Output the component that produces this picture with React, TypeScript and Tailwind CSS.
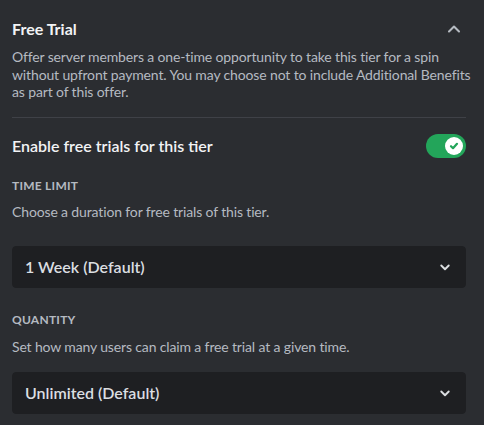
export default function App() {
  return (
    <div
      className="h-[425px] w-full bg-[#2b2d31] pl-3 pr-[18px] overflow-hidden"
      style={{ fontFamily: 'Lato, "Noto Sans", sans-serif' }}
    >
      {/* header */}
      <div className="flex items-center justify-between pt-[19px]">
        <h2 className="text-[16px] leading-5 font-bold text-[#f2f3f5]">Free Trial</h2>
        <svg width="20" height="20" viewBox="0 0 24 24" className="mr-[2px] text-[#b5bac1]">
          <path d="M6 15l6-6 6 6" fill="none" stroke="currentColor" strokeWidth="2.5" strokeLinecap="round" strokeLinejoin="round" />
        </svg>
      </div>
      <p className="mt-[9px] mr-[-16px] text-[14px] leading-[17.5px] tracking-[-0.01em] text-[#b5bac1]">
        Offer server members a one-time opportunity to take this tier for a spin without upfront payment. You may choose not to include Additional Benefits as part of this offer.
      </p>

      <div className="mt-[16px] h-px bg-[#3f4147]" />

      {/* toggle row */}
      <div className="mt-4 flex h-6 items-center justify-between">
        <span className="text-[16px] font-semibold text-[#f2f3f5]">Enable free trials for this tier</span>
        <div className="flex h-6 w-10 items-center justify-end rounded-full bg-[#23a55a] pr-[3px]">
          <div className="flex h-[18px] w-[18px] items-center justify-center rounded-full bg-white">
            <svg width="12" height="12" viewBox="0 0 12 12">
              <path d="M3 6.2l2 2 4-4.4" fill="none" stroke="#23a55a" strokeWidth="2.2" strokeLinecap="round" strokeLinejoin="round" />
            </svg>
          </div>
        </div>
      </div>

      {/* time limit */}
      <h3 className="mt-5 text-[12px] leading-4 font-bold uppercase tracking-[0.02em] text-[#b5bac1]">Time Limit</h3>
      <p className="mt-[9px] text-[14px] leading-[18px] tracking-[-0.01em] text-[#b5bac1]">Choose a duration for free trials of this tier.</p>
      <Select value="1 Week (Default)" className="mt-[25px]" />

      {/* quantity */}
      <h3 className="mt-6 text-[12px] leading-4 font-bold uppercase tracking-[0.02em] text-[#b5bac1]">Quantity</h3>
      <p className="mt-[10px] text-[14px] leading-[18px] tracking-[-0.01em] text-[#b5bac1]">Set how many users can claim a free trial at a given time.</p>
      <Select value="Unlimited (Default)" className="mt-4" />
    </div>
  );
}

function Select({ value, className }: { value: string; className: string }) {
  return (
    <div className={`${className} flex h-[42px] items-center justify-between rounded-[4px] border border-[#1e1f22] bg-[#1e1f22] pl-3 pr-[11px]`}>
      <span className="text-[16px] font-semibold text-[#dbdee1]">{value}</span>
      <svg width="18" height="18" viewBox="0 0 24 24" className="text-[#dbdee1]">
        <path d="M7 10l5 5 5-5" fill="none" stroke="currentColor" strokeWidth="2.5" strokeLinecap="round" strokeLinejoin="round" />
      </svg>
    </div>
  );
}
